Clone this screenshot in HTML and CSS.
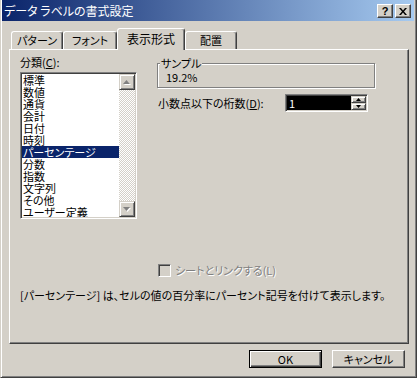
FILE: index.html
```html
<!DOCTYPE html>
<html lang="ja">
<head>
    <meta charset="UTF-8">
    <meta name="viewport" content="width=device-width, initial-scale=1.0">
    <title>データ ラベルの書式設定</title>
    <link rel="stylesheet" href="styles.css">
</head>
<body>
    <div class="window">
        <!-- Title bar -->
        <div class="titlebar">
            <span class="title">データ ラベルの書式設定</span>
            <div class="caption-buttons">
                <button class="cap-btn">?</button>
                <button class="cap-btn">
                    <svg width="8" height="7" viewBox="0 0 8 7"><path d="M0 0h2l2 2.5L6 0h2L5 3.5 8 7H6L4 4.5 2 7H0l3-3.5z" fill="#000"/></svg>
                </button>
            </div>
        </div>

        <!-- Tabs -->
        <div class="tabs">
            <div class="tab tab-pattern">パターン</div>
            <div class="tab tab-font">フォント</div>
            <div class="tab tab-number active">表示形式</div>
            <div class="tab tab-align">配置</div>
        </div>

        <div class="panel">
            <div class="top">
                <div class="category">
                    <div class="label">分類(<u>C</u>):</div>
                    <div class="listbox">
                        <ul class="items">
                            <li>標準</li>
                            <li>数値</li>
                            <li>通貨</li>
                            <li>会計</li>
                            <li>日付</li>
                            <li>時刻</li>
                            <li class="selected">パーセンテージ</li>
                            <li>分数</li>
                            <li>指数</li>
                            <li>文字列</li>
                            <li>その他</li>
                            <li>ユーザー定義</li>
                        </ul>
                        <div class="scrollbar">
                            <div class="sb-btn">
                                <svg width="8" height="5" viewBox="0 0 8 5"><path d="M4.5 1L8 5H1z" fill="#fff"/><path d="M3.5 0L7 4H0z" fill="#808080"/></svg>
                            </div>
                            <div class="sb-btn">
                                <svg width="8" height="5" viewBox="0 0 8 5"><path d="M1 1h7L4.5 5z" fill="#fff"/><path d="M0 0h7L3.5 4z" fill="#808080"/></svg>
                            </div>
                        </div>
                    </div>
                </div>

                <div class="options">
                    <fieldset class="sample">
                        <legend>サンプル</legend>
                        <div class="sample-value">19.2%</div>
                    </fieldset>
                    <div class="decimals">
                        <label>小数点以下の桁数(<u>D</u>):</label>
                        <div class="spinner">
                            <div class="spin-field">1</div>
                            <div class="spin-buttons">
                                <div class="spin-btn"><svg width="5" height="3" viewBox="0 0 5 3"><path d="M2.5 0L5 3H0z" fill="#000"/></svg></div>
                                <div class="spin-btn"><svg width="5" height="3" viewBox="0 0 5 3"><path d="M0 0h5L2.5 3z" fill="#000"/></svg></div>
                            </div>
                        </div>
                    </div>
                </div>
            </div>

            <div class="link-row">
                <span class="checkbox"></span>
                <span>シートとリンクする(L)</span>
            </div>

            <p class="desc">[パーセンテージ] は、セルの値の百分率にパーセント記号を付けて表示します。</p>
        </div>

        <div class="buttons">
            <button class="btn default">OK</button>
            <button class="btn">キャンセル</button>
        </div>
    </div>
</body>
</html>
```

FILE: styles.css
```css
* {
    box-sizing: border-box;
}
body {
    margin: 0;
    background: #d4d0c8;
    font-family: "Noto Sans CJK JP", sans-serif;
    font-size: 11px;
    font-feature-settings: "palt";
    color: #000;
}
.window {
    width: 417px;
    height: 378px;
    border-left: 1px solid #d4d0c8;
    border-right: 1px solid #404040;
    border-bottom: 1px solid #404040;
    box-shadow: inset 1px 0 #fff, inset -1px -1px #808080;
    padding: 0 2px 0 1px;
}

/* title bar */
.titlebar {
    display: flex;
    align-items: flex-start;
    height: 21px;
    padding: 0 3px 0 2px;
    background: linear-gradient(to right, #0a246a, #a6caf0);
    color: #fff;
}
.title {
    flex: 1;
    font-size: 12px;
    line-height: 21px;
}
.caption-buttons {
    display: flex;
    gap: 2px;
    margin-top: 4px;
}
.cap-btn {
    width: 16px;
    height: 14px;
    padding: 0;
    display: flex;
    align-items: center;
    justify-content: center;
    background: #d4d0c8;
    border: 1px solid;
    border-color: #fff #404040 #404040 #fff;
    box-shadow: inset -1px -1px #808080;
    font: bold 11px "Liberation Sans", sans-serif;
    color: #000;
}

/* tabs */
.tabs {
    display: flex;
    align-items: flex-end;
    height: 28px;
    padding-left: 9px;
}
.tab {
    height: 18px;
    border: 1px solid;
    border-bottom: none;
    border-color: #fff #404040 transparent #fff;
    border-radius: 3px 3px 0 0;
    box-shadow: inset -1px 0 #808080;
    text-align: center;
    line-height: 16px;
}
.tab-pattern { width: 52px; }
.tab-font { width: 54px; }
.tab-number { width: 68px; }
.tab-align { width: 52px; }
.tab.active {
    position: relative;
    z-index: 1;
    height: 22px;
    margin-bottom: -1px;
    background: #d4d0c8;
    font-size: 12px;
    line-height: 19px;
}

/* panel */
.panel {
    margin-left: 7px;
    width: 400px;
    height: 295px;
    border: 1px solid;
    border-color: #fff #404040 #404040 #fff;
    box-shadow: inset -1px -1px #808080;
    padding: 5px 0 0 10px;
}
.top {
    display: flex;
    gap: 20px;
}
.category {
    width: 117px;
}
.label {
    line-height: 14px;
}
.listbox {
    display: flex;
    height: 147px;
    margin-top: 3px;
    padding: 1px;
    background: #fff;
    border: 1px solid;
    border-color: #808080 #fff #fff #808080;
    box-shadow: inset 1px 1px #404040, inset -1px -1px #d4d0c8;
}
.items {
    flex: 1;
    list-style: none;
    margin: 0;
    padding: 0;
    overflow: hidden;
}
.items li {
    height: 12px;
    line-height: 12px;
    padding-left: 1px;
    white-space: nowrap;
}
.items li.selected {
    background: #0a246a;
    color: #fff;
}
.scrollbar {
    width: 16px;
    display: flex;
    flex-direction: column;
    justify-content: space-between;
    background: repeating-conic-gradient(#fff 0 25%, #d4d0c8 0 50%) 0 0 / 2px 2px;
}
.sb-btn {
    width: 16px;
    height: 16px;
    display: flex;
    align-items: center;
    justify-content: center;
    background: #d4d0c8;
    border: 1px solid;
    border-color: #d4d0c8 #404040 #404040 #d4d0c8;
    box-shadow: inset 1px 1px #fff, inset -1px -1px #808080;
}

.options {
    width: 218px;
}
.sample {
    margin: 1px 0 0;
    padding: 0 8px 3px 2px;
    border: 1px solid #808080;
    box-shadow: inset 1px 1px #fff, 1px 1px #fff;
}
.sample legend {
    padding: 0 1px;
    line-height: 14px;
    background: #d4d0c8;
}
.sample-value {
    padding-left: 6px;
    line-height: 14px;
}
.decimals {
    display: flex;
    align-items: center;
    margin-top: 6px;
}
.decimals label {
    width: 128px;
    padding-left: 1px;
}
.spinner {
    display: flex;
    width: 83px;
    height: 18px;
    padding: 1px;
    background: #000;
    border: 1px solid;
    border-color: #808080 #fff #fff #808080;
    box-shadow: inset 1px 1px #404040, inset -1px -1px #d4d0c8;
}
.spin-field {
    flex: 1;
    color: #fff;
    line-height: 14px;
    padding-left: 2px;
}
.spin-buttons {
    display: flex;
    flex-direction: column;
    width: 15px;
}
.spin-btn {
    flex: 1;
    display: flex;
    align-items: center;
    justify-content: center;
    background: #d4d0c8;
    border: 1px solid;
    border-color: #d4d0c8 #404040 #404040 #d4d0c8;
    box-shadow: inset 1px 1px #fff, inset -1px -1px #808080;
}

.link-row {
    display: flex;
    align-items: center;
    gap: 4px;
    height: 14px;
    margin: 44px 0 0 138px;
    color: #808080;
    text-shadow: 1px 1px #fff;
}
.checkbox {
    width: 13px;
    height: 13px;
    background: #d4d0c8;
    border: 1px solid;
    border-color: #808080 #fff #fff #808080;
    box-shadow: inset 1px 1px #404040, inset -1px -1px #d4d0c8;
}
.desc {
    margin: 11px 0 0;
    line-height: 14px;
}

/* dialog buttons */
.buttons {
    display: flex;
    justify-content: flex-end;
    gap: 10px;
    margin-top: 6px;
    padding-right: 9px;
}
.btn {
    width: 73px;
    height: 18px;
    padding: 0;
    background: #d4d0c8;
    border: 1px solid;
    border-color: #fff #404040 #404040 #fff;
    box-shadow: inset -1px -1px #808080;
    font: inherit;
    color: #000;
}
.btn.default {
    border-color: #000;
    box-shadow: inset 1px 1px #fff, inset -1px -1px #404040, inset -2px -2px #808080;
}
```
